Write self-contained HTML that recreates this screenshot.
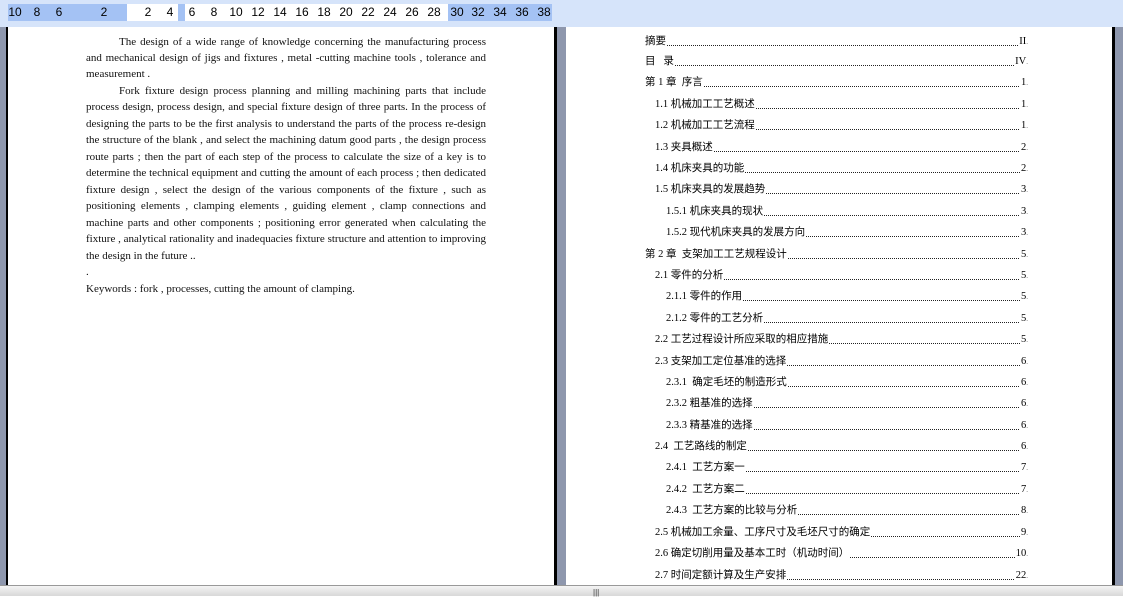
<!DOCTYPE html>
<html><head><meta charset="utf-8"><style>
*{margin:0;padding:0;box-sizing:border-box}
body{width:1123px;height:596px;overflow:hidden;background:#fff;position:relative;font-family:"Liberation Serif","Noto Serif CJK SC",serif;color:#000}
.ruler{position:absolute;left:0;top:0;width:1123px;height:27px;background:#d6e4fa}
.seg{position:absolute;top:4px;height:17px}
.num{position:absolute;top:5px;font:12px "Liberation Sans",sans-serif;transform:translateX(-50%)}
.abs{position:absolute}
.ln{position:absolute;left:86px;width:400px;font-size:11px;white-space:nowrap;line-height:16px;color:#111}
.j{text-align:justify;text-align-last:justify;white-space:normal;height:16px;overflow:hidden;word-spacing:-1px}
.toc{position:absolute;right:95px;display:flex;font-size:10.5px;font-family:"Liberation Serif","Noto Sans CJK SC",sans-serif;line-height:14px;height:14px;white-space:nowrap}
.toc .d{flex:1;height:1px;align-self:flex-end;margin:0 1px 3px 1px;background:repeating-linear-gradient(90deg,#222 0 1px,transparent 1px 2px)}
.toc .p::after{content:".";font-size:7px;color:#666}
</style></head><body>
<div class="ruler">
<div class="seg" style="left:8px;width:119px;background:#a4c2f4"></div>
<div class="seg" style="left:127px;width:51px;background:#fff"></div>
<div class="seg" style="left:178px;width:7px;background:#a4c2f4"></div>
<div class="seg" style="left:185px;width:263px;background:#fff"></div>
<div class="seg" style="left:448px;width:104px;background:#a4c2f4"></div>
<span class="num" style="left:15px">10</span><span class="num" style="left:37px">8</span><span class="num" style="left:59px">6</span><span class="num" style="left:104px">2</span><span class="num" style="left:148px">2</span><span class="num" style="left:170px">4</span><span class="num" style="left:192px">6</span><span class="num" style="left:214px">8</span><span class="num" style="left:236px">10</span><span class="num" style="left:258px">12</span><span class="num" style="left:280px">14</span><span class="num" style="left:302px">16</span><span class="num" style="left:324px">18</span><span class="num" style="left:346px">20</span><span class="num" style="left:368px">22</span><span class="num" style="left:390px">24</span><span class="num" style="left:412px">26</span><span class="num" style="left:434px">28</span><span class="num" style="left:457px">30</span><span class="num" style="left:478px">32</span><span class="num" style="left:500px">34</span><span class="num" style="left:522px">36</span><span class="num" style="left:544px">38</span>
</div>
<div class="abs" style="left:0;top:27px;width:6px;height:558px;background:#8e97ad"></div>
<div class="abs" style="left:6px;top:27px;width:2px;height:558px;background:#000"></div>
<div class="abs" style="left:554px;top:27px;width:3px;height:558px;background:#000"></div>
<div class="abs" style="left:557px;top:27px;width:9px;height:558px;background:#8e97ad"></div>
<div class="abs" style="left:1112px;top:27px;width:3px;height:558px;background:#000"></div>
<div class="abs" style="left:1115px;top:27px;width:8px;height:558px;background:#8e97ad"></div>
<div class="abs" style="left:0;top:585px;width:1123px;height:11px;background:linear-gradient(#f4f4f4,#d8d8d8);border-top:1px solid #999"></div>
<div class="abs" style="left:593px;top:588px;font:8px 'Liberation Sans';color:#333">|||</div>

<div class="ln j" style="top:34px;padding-left:33px">The design of a wide range of knowledge concerning the manufacturing process</div>
<div class="ln j" style="top:50px">and mechanical design of jigs and fixtures , metal -cutting machine tools , tolerance and</div>
<div class="ln" style="top:66px">measurement .</div>
<div class="ln j" style="top:83px;padding-left:33px">Fork fixture design process planning and milling machining parts that include</div>
<div class="ln j" style="top:99px">process design, process design, and special fixture design of three parts. In the process of</div>
<div class="ln j" style="top:116px">designing the parts to be the first analysis to understand the parts of the process re-design</div>
<div class="ln j" style="top:132px">the structure of the blank , and select the machining datum good parts , the design process</div>
<div class="ln j" style="top:149px">route parts ; then the part of each step of the process to calculate the size of a key is to</div>
<div class="ln j" style="top:165px">determine the technical equipment and cutting the amount of each process ; then dedicated</div>
<div class="ln j" style="top:182px">fixture design , select the design of the various components of the fixture , such as</div>
<div class="ln j" style="top:198px">positioning elements , clamping elements , guiding element , clamp connections and</div>
<div class="ln j" style="top:215px">machine parts and other components ; positioning error generated when calculating the</div>
<div class="ln j" style="top:231px">fixture , analytical rationality and inadequacies fixture structure and attention to improving</div>
<div class="ln" style="top:248px">the design in the future ..</div>
<div class="ln" style="top:264px">.</div>
<div class="ln" style="top:281px">Keywords : fork , processes, cutting the amount of clamping.</div>

<div class="toc" style="top:35px;left:645px"><span>摘要</span><span class="d"></span><span class="p">II</span></div>
<div class="toc" style="top:55px;left:645px"><span>目&nbsp;&nbsp;&nbsp;录</span><span class="d"></span><span class="p">IV</span></div>
<div class="toc" style="top:76px;left:645px"><span>第 1 章&nbsp; 序言</span><span class="d"></span><span class="p">1</span></div>
<div class="toc" style="top:98px;left:655px"><span>1.1 机械加工工艺概述</span><span class="d"></span><span class="p">1</span></div>
<div class="toc" style="top:119px;left:655px"><span>1.2 机械加工工艺流程</span><span class="d"></span><span class="p">1</span></div>
<div class="toc" style="top:141px;left:655px"><span>1.3 夹具概述</span><span class="d"></span><span class="p">2</span></div>
<div class="toc" style="top:162px;left:655px"><span>1.4 机床夹具的功能</span><span class="d"></span><span class="p">2</span></div>
<div class="toc" style="top:183px;left:655px"><span>1.5 机床夹具的发展趋势</span><span class="d"></span><span class="p">3</span></div>
<div class="toc" style="top:205px;left:666px"><span>1.5.1 机床夹具的现状</span><span class="d"></span><span class="p">3</span></div>
<div class="toc" style="top:226px;left:666px"><span>1.5.2 现代机床夹具的发展方向</span><span class="d"></span><span class="p">3</span></div>
<div class="toc" style="top:248px;left:645px"><span>第 2 章&nbsp; 支架加工工艺规程设计</span><span class="d"></span><span class="p">5</span></div>
<div class="toc" style="top:269px;left:655px"><span>2.1 零件的分析</span><span class="d"></span><span class="p">5</span></div>
<div class="toc" style="top:290px;left:666px"><span>2.1.1 零件的作用</span><span class="d"></span><span class="p">5</span></div>
<div class="toc" style="top:312px;left:666px"><span>2.1.2 零件的工艺分析</span><span class="d"></span><span class="p">5</span></div>
<div class="toc" style="top:333px;left:655px"><span>2.2 工艺过程设计所应采取的相应措施</span><span class="d"></span><span class="p">5</span></div>
<div class="toc" style="top:355px;left:655px"><span>2.3 支架加工定位基准的选择</span><span class="d"></span><span class="p">6</span></div>
<div class="toc" style="top:376px;left:666px"><span>2.3.1&nbsp; 确定毛坯的制造形式</span><span class="d"></span><span class="p">6</span></div>
<div class="toc" style="top:397px;left:666px"><span>2.3.2 粗基准的选择</span><span class="d"></span><span class="p">6</span></div>
<div class="toc" style="top:419px;left:666px"><span>2.3.3 精基准的选择</span><span class="d"></span><span class="p">6</span></div>
<div class="toc" style="top:440px;left:655px"><span>2.4&nbsp; 工艺路线的制定</span><span class="d"></span><span class="p">6</span></div>
<div class="toc" style="top:461px;left:666px"><span>2.4.1&nbsp; 工艺方案一</span><span class="d"></span><span class="p">7</span></div>
<div class="toc" style="top:483px;left:666px"><span>2.4.2&nbsp; 工艺方案二</span><span class="d"></span><span class="p">7</span></div>
<div class="toc" style="top:504px;left:666px"><span>2.4.3&nbsp; 工艺方案的比较与分析</span><span class="d"></span><span class="p">8</span></div>
<div class="toc" style="top:526px;left:655px"><span>2.5 机械加工余量、工序尺寸及毛坯尺寸的确定</span><span class="d"></span><span class="p">9</span></div>
<div class="toc" style="top:547px;left:655px"><span>2.6 确定切削用量及基本工时（机动时间）</span><span class="d"></span><span class="p">10</span></div>
<div class="toc" style="top:569px;left:655px"><span>2.7 时间定额计算及生产安排</span><span class="d"></span><span class="p">22</span></div>
</body></html>
